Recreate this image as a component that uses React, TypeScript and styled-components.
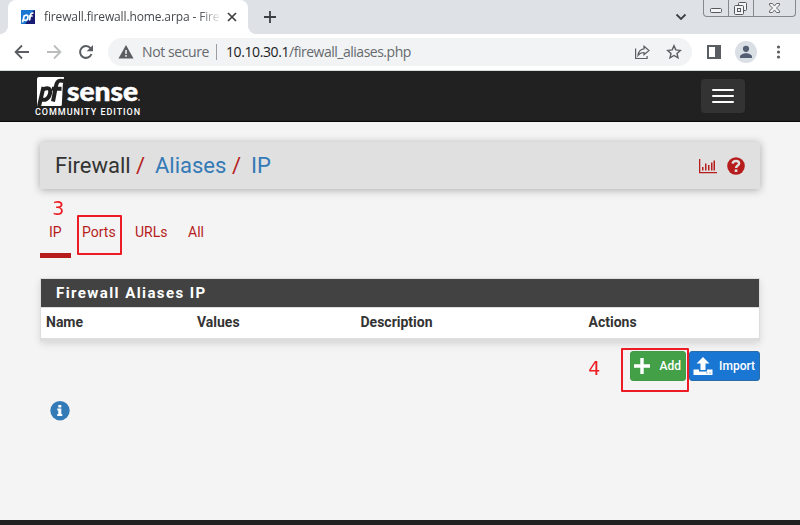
import React from "react";
import styled, { createGlobalStyle } from "styled-components";

const Global = createGlobalStyle`
  * { box-sizing: border-box; }
  html, body { margin: 0; padding: 0; overflow: hidden; }
  svg { display: block; flex: none; }
`;

const Window = styled.div`
  width: 800px;
  height: 525px;
  display: flex;
  flex-direction: column;
  background: #f4f4f4;
  overflow: hidden;
  font-family: Roboto, sans-serif;
  color: #333;
`;

/* ---------- Browser chrome ---------- */
const TabStrip = styled.div`
  height: 34px;
  background: #dee1e6;
  display: flex;
  align-items: flex-start;
  flex: none;
`;

const TabCorner = styled.div<{ $side: "left" | "right" }>`
  width: 8px;
  height: 34px;
  background: radial-gradient(
    circle at ${(p) => (p.$side === "left" ? "0 0" : "8px 0")},
    #dee1e6 7.6px,
    #fff 8.2px
  ) 0 26px / 8px 8px no-repeat;
`;

const BrowserTab = styled.div`
  width: 240px;
  height: 34px;
  background: #fff;
  border-radius: 8px 8px 0 0;
  padding-left: 13px;
  display: flex;
  align-items: center;
`;

const TabTitle = styled.div`
  width: 176px;
  margin: 0 6px 0 9px;
  overflow: hidden;
  white-space: nowrap;
  font: 12px/20px "Open Sans", sans-serif;
  letter-spacing: -0.13px;
  color: #45484c;
  mask-image: linear-gradient(to right, #000 155px, transparent 178px);
`;

const NewTab = styled.div`
  margin: 11px 0 0 8px;
`;

const Chevron = styled.div`
  margin: 13px 16px 0 auto;
`;

const WindowButtons = styled.div`
  width: 93px;
  height: 17px;
  margin-right: 4px;
  border: 1px solid #85888c;
  border-top: 0;
  border-radius: 0 0 4px 4px;
  display: grid;
  grid-template-columns: 25px 25px 1fr;
`;

const WindowButton = styled.div`
  border-right: 1px solid #85888c;
  &:last-child { border-right: 0; }
`;

const Toolbar = styled.div`
  height: 37px;
  background: #fff;
  border-bottom: 1px solid #d5dbd8;
  display: flex;
  align-items: center;
  padding: 0 13px 0 14px;
  flex: none;
`;

const NavIcons = styled.div`
  display: flex;
  gap: 16px;
  margin-right: 14px;
`;

const Omnibox = styled.div`
  width: 584px;
  height: 28px;
  border-radius: 14px;
  background: #f1f3f4;
  display: flex;
  align-items: center;
  padding: 0 10px;
  font: 14px/20px "Open Sans", sans-serif;
  color: #66696e;
  white-space: nowrap;
`;

const Security = styled.span`
  margin-left: 8px;
  width: 74px;
  letter-spacing: -0.4px;
`;

const Divider = styled.span`
  width: 1px;
  height: 16px;
  background: #9a9da1;
  margin-right: 9px;
`;

const Address = styled.span`
  letter-spacing: -0.49px;
  b { font-weight: 400; color: #202124; letter-spacing: -0.4px; }
`;

const AddressActions = styled.div`
  margin-left: auto;
  display: flex;
  gap: 16px;
`;

const BrowserActions = styled.div`
  margin-left: auto;
  display: flex;
  align-items: center;
  gap: 14px;
`;

/* ---------- Application ---------- */
const Navbar = styled.header`
  height: 51px;
  background: #212121;
  border-bottom: 1px solid #080808;
  display: flex;
  justify-content: space-between;
  align-items: flex-start;
  padding: 6px 55px 0 35px;
  flex: none;
`;

const Edition = styled.div`
  font: 500 9px/11px Roboto, sans-serif;
  letter-spacing: 0.96px;
  color: #fff;
  white-space: nowrap;
`;

const MenuButton = styled.div`
  width: 44px;
  height: 34px;
  margin-top: 2px;
  border-radius: 4px;
  background: #333;
  display: flex;
  flex-direction: column;
  align-items: center;
  padding-top: 10px;
  gap: 4px;
`;

const MenuBar = styled.span`
  width: 22px;
  height: 2px;
  background: #fff;
  border-radius: 1px;
`;

const Content = styled.main`
  position: relative;
  flex: 1;
  padding: 20px 40px 0;
`;

const Breadcrumb = styled.div`
  height: 47px;
  background: #e0e0e0;
  box-shadow: 0 1px 8px rgba(0, 0, 0, 0.3);
  display: flex;
  align-items: center;
  padding: 0 15px;
  font-size: 22px;
  line-height: 30px;
`;

const Crumb = styled.span<{ $width: number; $color: string }>`
  width: ${(p) => p.$width}px;
  color: ${(p) => p.$color};
  white-space: nowrap;
`;

const HeaderIcons = styled.div`
  margin-left: auto;
  display: flex;
  align-items: center;
  gap: 10px;
`;

const Tabs = styled.div`
  margin-top: 28px;
  display: flex;
  height: 41px;
`;

const TabLink = styled.div<{ $active?: boolean; $width: number }>`
  width: ${(p) => p.$width}px;
  height: 41px;
  padding: 5px 0 0 9px;
  font-size: 14px;
  line-height: 20px;
  color: #b71c1c;
  border-bottom: 5px solid ${(p) => (p.$active ? "#b71c1c" : "transparent")};
  margin-right: 2px;
`;

const Panel = styled.section`
  margin-top: 20px;
  height: 63px;
  background: #fff;
  border: 1px solid #ddd;
  border-bottom: 3px solid #ddd;
  box-shadow: 0 3px 7px rgba(0, 0, 0, 0.12);
`;

const PanelTitle = styled.h2`
  margin: 0;
  height: 29px;
  background: #424242;
  border-bottom: 1px solid #ddd;
  color: #fff;
  padding-left: 15px;
  font-size: 15px;
  font-weight: 700;
  line-height: 28px;
  letter-spacing: 1.42px;
`;

const TableHead = styled.div`
  display: grid;
  grid-template-columns: 151px 163.500px 228px 1fr;
  padding-left: 5px;
  font-size: 14px;
  font-weight: 700;
  line-height: 29px;
`;

const Actions = styled.div`
  display: flex;
  justify-content: flex-end;
  gap: 3px;
  margin-top: 10px;
`;

const Button = styled.div<{ $tone: "green" | "blue" }>`
  width: ${(p) => (p.$tone === "green" ? 56 : 71)}px;
  height: 30px;
  border-radius: 3px;
  background: ${(p) => (p.$tone === "green" ? "#43a047" : "#1976d2")};
  border: 1px solid ${(p) => (p.$tone === "green" ? "#439a46" : "#2a6da8")};
  display: flex;
  align-items: center;
  justify-content: space-between;
  padding: 0 4px 0 ${(p) => (p.$tone === "green" ? 2 : 3)}px;
  color: #fff;
  font-size: 12px;
  font-weight: 500;
`;

const Info = styled.div`
  margin: 20px 0 0 10px;
`;

const Marker = styled.div<{ $x: number; $y: number; $w: number; $h: number }>`
  position: absolute;
  left: ${(p) => p.$x}px;
  top: ${(p) => p.$y}px;
  width: ${(p) => p.$w}px;
  height: ${(p) => p.$h}px;
  border: 2px solid #ed1c24;
  border-radius: 1px;
`;

const Step = styled.div<{ $x: number; $y: number }>`
  position: absolute;
  left: ${(p) => p.$x}px;
  top: ${(p) => p.$y}px;
  font: 20px/20px "DejaVu Sans", sans-serif;
  transform: scaleX(0.95);
  color: #ed1c24;
`;

const Footer = styled.footer`
  height: 5px;
  background: #212121;
  flex: none;
`;

/* ---------- Drawings ---------- */
const Favicon = () => (
  <svg width="14" height="14" viewBox="0 0 14 14">
    <path fill="#1976d2" d="M0 0h14v14H0z" />
    <path fill="#171c72" d="M14 0v14H4l5-6 2-6z" />
    <g fill="none" stroke="#fff" strokeWidth="1.7">
      <path d="M3.4 5.2 1.5 12.4M3 6c4-2 4.4.1 3.8 2.3S4.6 10.7 2.800 9.8" />
      <path d="M12.5 3.2c-2-.5-2.600.3-3 2L8.400 10.500M7.900 6h3.800" />
    </g>
  </svg>
);

const Logo = () => (
  <svg width="108" height="30" viewBox="0 0 108 30">
    <path fill="#fff" d="M4 0h25l-1.200 8-1 20q-.3 1-1.300 1H5.500l1-6.500L2 29V2q0-2 2-2z" />
    <g fill="none" stroke="#212121" strokeWidth="4">
      <path d="m8.500 10-4.300 18.500M7.500 13c5-3.500 9-1.600 7.400 4-1.400 5-5.200 7.300-9 4.800" />
      <path d="M29 4.200c-5-1.500-7-.2-8 4.600L18 24.500M17 11.700h9.500" />
    </g>
    <text x="32" y="23.500" fill="#fff" stroke="#fff" strokeWidth=".5" fontFamily="Lato, sans-serif" fontWeight="900" fontSize="26.500" textLength="71" lengthAdjust="spacingAndGlyphs">sense</text>
    <circle cx="104" cy="23" r="1" fill="#aaa" />
  </svg>
);

const gray = "#5a5d61";

export default function App() {
  return (
    <Window>
      <Global />
      <TabStrip>
        <TabCorner $side="left" />
        <BrowserTab>
          <Favicon />
          <TabTitle>firewall.firewall.home.arpa - Firewall</TabTitle>
          <svg width="12" height="12" viewBox="0 0 12 12" stroke="#3c4043" strokeWidth="1.700"><path d="m2 2 8 8m0-8-8 8" /></svg>
        </BrowserTab>
        <TabCorner $side="right" />
        <NewTab>
          <svg width="12" height="12" viewBox="0 0 12 12" stroke="#3c4043" strokeWidth="1.800"><path d="M6 0v12M0 6h12" /></svg>
        </NewTab>
        <Chevron>
          <svg width="12" height="8" viewBox="0 0 12 8" fill="none" stroke="#3c4043" strokeWidth="1.800"><path d="m1.500 1.500 4.500 4.500 4.500-4.500" /></svg>
        </Chevron>
        <WindowButtons>
          <WindowButton>
            <svg width="24" height="16" fill="#f3f4f5" stroke="#55585c"><rect x="6.500" y="8.500" width="11" height="4" rx="1" /></svg>
          </WindowButton>
          <WindowButton>
            <svg width="24" height="16" fill="#f3f4f5" stroke="#55585c"><rect x="9.500" y="2.500" width="8" height="8" rx="1" /><rect x="5.500" y="5.500" width="9" height="9" rx="1" /><rect x="8.500" y="8.500" width="3" height="3" /></svg>
          </WindowButton>
          <WindowButton>
            <svg width="41" height="16" fill="#f3f4f5" stroke="#66696d"><path d="M15.500 3.500h3l2 2.500 2-2.500h3v1.500L22.500 8l3 3v1.500h-3l-2-2.500-2 2.500h-3V11l3-3-3-3z" /></svg>
          </WindowButton>
        </WindowButtons>
      </TabStrip>

      <Toolbar>
        <NavIcons>
          <svg width="16" height="16" viewBox="0 0 16 16" fill="none" stroke={gray} strokeWidth="1.800"><path d="M15 8H2M8 1.500 1.600 8 8 14.500" /></svg>
          <svg width="16" height="16" viewBox="0 0 16 16" fill="none" stroke="#babcbe" strokeWidth="1.800"><path d="M1 8h13M8 1.500 14.400 8 8 14.500" /></svg>
          <svg width="16" height="16" viewBox="0 0 16 16" fill="none" stroke={gray} strokeWidth="2"><path d="M13.500 10A5.900 5.900 0 1 1 12.600 4.300" /><path fill={gray} stroke="none" d="M15 1v6.300H8.700z" /></svg>
        </NavIcons>
        <Omnibox>
          <svg width="16" height="14" viewBox="0 0 16 14"><path fill={gray} d="M8 0l7.500 13.500H.5z" /><path stroke="#f1f3f4" strokeWidth="1.500" d="M8 5v4M8 10v1.700" /></svg>
          <Security>Not secure</Security>
          <Divider />
          <Address><b>10.10.30.1</b>/firewall_aliases.php</Address>
          <AddressActions>
            <svg width="16" height="16" viewBox="0 0 16 16" fill="none" stroke={gray} strokeWidth="1.200"><path d="M1.600 4.500v10h11.500V12M10 2.200l5 4.300-5 4.300V8.500c-3 0-4.600 1-6 3 .4-4 2.500-6.300 6-6.700z" /></svg>
            <svg width="16" height="16" viewBox="0 0 16 16" fill="none" stroke={gray} strokeWidth="1.400"><path d="m8 1.800 1.800 4.100 4.500.5-3.300 3 1 4.400L8 11.500l-4 2.300 1-4.400-3.300-3 4.500-.5z" /></svg>
          </AddressActions>
        </Omnibox>
        <BrowserActions>
          <svg width="14" height="14" viewBox="0 0 14 14"><path fill={gray} d="M0 0h14v14H0z" /><path fill="#fff" d="M2 2h6v10H2z" /></svg>
          <svg width="22" height="22" viewBox="0 0 22 22"><circle cx="11" cy="11" r="11" fill="#dadfe6" /><g fill="#535e73"><circle cx="11" cy="7.800" r="3.100" /><path d="M5 17v-1.500c0-2 3.500-3.300 6-3.300s6 1.300 6 3.300V17z" /></g></svg>
          <svg width="16" height="14" viewBox="0 0 16 14" fill={gray}><circle cx="7.500" cy="2" r="1.600" /><circle cx="7.500" cy="7" r="1.600" /><circle cx="7.500" cy="12" r="1.600" /></svg>
        </BrowserActions>
      </Toolbar>

      <Navbar>
        <div>
          <Logo />
          <Edition>COMMUNITY EDITION</Edition>
        </div>
        <MenuButton><MenuBar /><MenuBar /><MenuBar /></MenuButton>
      </Navbar>

      <Content>
        <Breadcrumb>
          <Crumb $width={81} $color="#333">Firewall</Crumb>
          <Crumb $width={19} $color="#b71c1c">/</Crumb>
          <Crumb $width={77} $color="#337ab7">Aliases</Crumb>
          <Crumb $width={19} $color="#b71c1c">/</Crumb>
          <Crumb $width={24} $color="#337ab7">IP</Crumb>
          <HeaderIcons>
            <svg width="18" height="16" viewBox="0 0 18 16" fill="#b71c1c"><path d="M0 1h1.300v13H18v1.300H0zM3 9h1.500v3.500H3zM6 5.500h1.500v7H6zM9 7h1.500v5.500H9zM12 4.500h1.500v8H12zM14.500 2.500H16v10h-1.500z" /></svg>
            <svg width="18" height="18" viewBox="0 0 18 18"><circle cx="9" cy="9" r="8.800" fill="#b71c1c" /><path fill="none" stroke="#e0e0e0" strokeWidth="2.400" d="M5.700 6.600C6 3.200 12.100 3.200 12.100 6.600c0 2.100-3 1.900-3 4.400" /><path fill="#e0e0e0" d="M7.700 12.400h2.700V15H7.700z" /></svg>
          </HeaderIcons>
        </Breadcrumb>

        <Tabs>
          <TabLink $active $width={31}>IP</TabLink>
          <TabLink $width={51}>Ports</TabLink>
          <TabLink $width={51}>URLs</TabLink>
          <TabLink $width={40}>All</TabLink>
        </Tabs>

        <Panel>
          <PanelTitle>Firewall Aliases IP</PanelTitle>
          <TableHead>
            <span>Name</span><span>Values</span><span>Description</span><span>Actions</span>
          </TableHead>
        </Panel>

        <Actions>
          <Button $tone="green">
            <svg width="18" height="18" viewBox="0 0 18 18" fill="#fff"><path d="M7.300 1h3.400v6.300H17v3.400h-6.300V17H7.300v-6.300H1V7.300h6.300z" /></svg>
            Add
          </Button>
          <Button $tone="blue">
            <svg width="20" height="20" viewBox="0 0 20 20" fill="#fff"><path d="m10 1 6.500 6.500h-4V14h-5V7.500h-4z" /><path d="M.5 13.500H6v2h8v-2h5.500V19H.5z" /><path fill="#1976d2" d="M13.500 16.500h1v1h-1zM16.500 16.500h1v1h-1z" /></svg>
            Import
          </Button>
        </Actions>

        <Info>
          <svg width="20" height="20" viewBox="0 0 20 20"><circle cx="10" cy="9.700" r="9.700" fill="#337ab7" /><path fill="#fff" d="M8.300 4h3v2.500h-3zM7.300 7.500h4v5.500h1v2h-5v-2h1V9.500h-1z" /></svg>
        </Info>

        <Marker $x={77} $y={93} $w={45} $h={40} />
        <Step $x={52} $y={76}>3</Step>
        <Marker $x={621} $y={226} $w={68} $h={44} />
        <Step $x={588} $y={236}>4</Step>
      </Content>
      <Footer />
    </Window>
  );
}
